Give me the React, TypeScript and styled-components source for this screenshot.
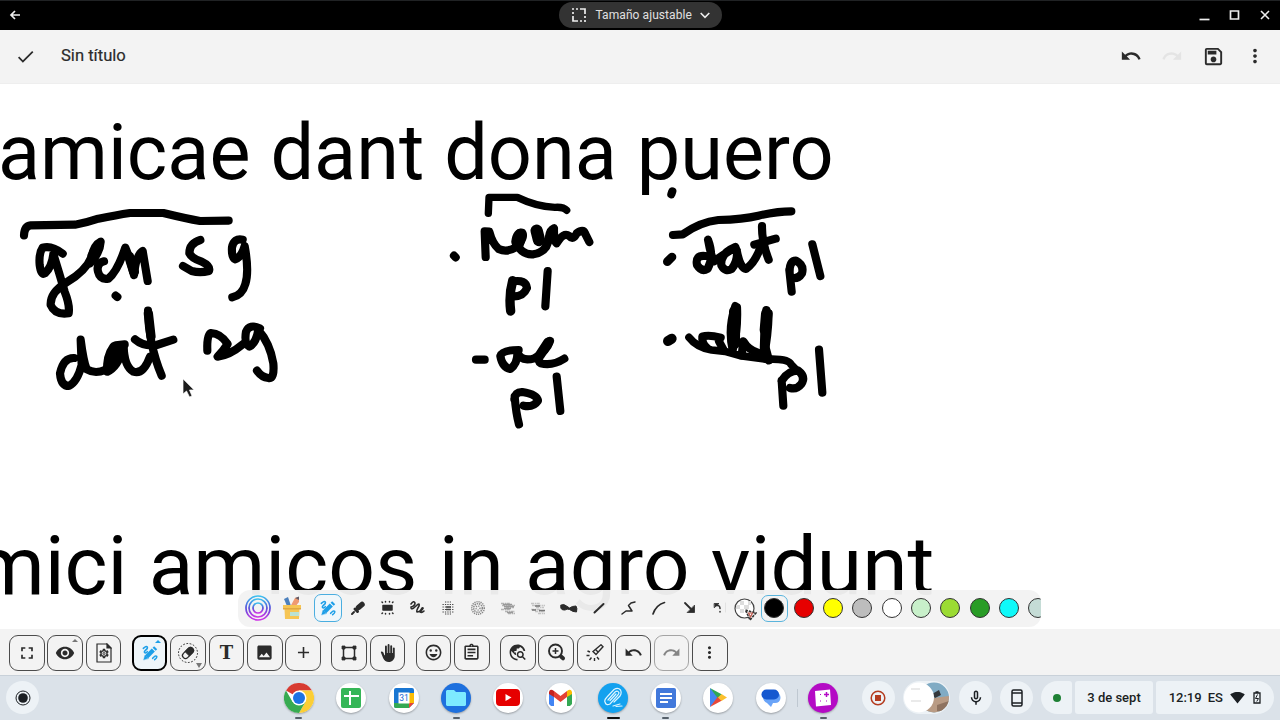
import { ReactNode } from "react";
import styled, { createGlobalStyle, css } from "styled-components";
import {
  MdAdd,
  MdBackHand,
  MdCheck,
  MdFullscreen,
  MdImage,
  MdMoreVert,
  MdOutlineAssignment,
  MdOutlineEmojiEmotions,
  MdOutlineMicNone,
  MdOutlineSave,
  MdRedo,
  MdSettings,
  MdSignalWifi4Bar,
  MdTravelExplore,
  MdUndo,
  MdVisibility,
} from "react-icons/md";

const GlobalStyle = createGlobalStyle`
  * {
    box-sizing: border-box;
  }
  body {
    margin: 0;
    background: #fff;
    font-family: Roboto, "Liberation Sans", sans-serif;
  }
  svg {
    display: block;
    flex: none;
  }
`;

const Screen = styled.div`
  display: flex;
  flex-direction: column;
  width: 1280px;
  height: 720px;
  overflow: hidden;
`;

const TitleBar = styled.header`
  display: grid;
  grid-template-columns: 1fr 163px 1fr;
  align-items: center;
  height: 30px;
  padding: 0 8px 1px;
  background: #000;
  border-top: 1px solid #202224;
  color: #eee;
`;

const SizePill = styled.div`
  display: flex;
  align-items: center;
  height: 26px;
  padding: 0 12px 0 13px;
  border-radius: 13px;
  background: #333;
  color: #e0e0e0;
  font-size: 12px;
  letter-spacing: 0.08px;
  white-space: nowrap;
`;

const PillLabel = styled.span`
  flex: 1;
  margin-left: 10px;
`;

const WindowButtons = styled.div`
  display: flex;
  justify-content: flex-end;
  gap: 17px;
`;

const AppBar = styled.div`
  display: flex;
  align-items: center;
  height: 54px;
  padding: 0 14px 1px 15px;
  background: #f3f3f3;
  border-bottom: 1px solid #eee;
  color: #2b2b2b;
`;

const DocTitle = styled.h1`
  flex: 1;
  margin: 0 0 2px 25px;
  font-size: 16.6px;
  font-weight: 400;
  -webkit-text-stroke: 0.2px #2b2b2b;
`;

const AppActions = styled.div`
  display: flex;
  align-items: center;
  gap: 19px;
`;

const Faded = styled.span`
  color: #e4e4e4;
`;

const Canvas = styled.main`
  position: relative;
  height: 545px;
  overflow: hidden;
  background: #fff;
`;

const CanvasText = styled.p<{ x: number; y: number; size: number }>`
  position: absolute;
  left: ${({ x }) => x}px;
  top: ${({ y }) => y}px;
  margin: 0;
  color: #000;
  font-size: ${({ size }) => size}px;
  line-height: 94px;
  word-spacing: 0.8px;
  white-space: nowrap;
`;

const Ink = styled.svg`
  position: absolute;
  inset: 0;
  fill: none;
  stroke: #000;
  stroke-width: 24.5;
  stroke-linecap: round;
  stroke-linejoin: round;
`;

const Palette = styled.div`
  position: absolute;
  left: 238px;
  bottom: 2px;
  display: flex;
  align-items: center;
  width: 803px;
  height: 37px;
  padding: 0 0 1px 5px;
  border-radius: 12px;
  background: rgba(243, 243, 243, 0.96);
  overflow: hidden;
  color: #2b2b2b;
`;

const PaletteTool = styled.div<{ w?: number; active?: boolean }>`
  display: flex;
  flex: none;
  align-items: center;
  justify-content: center;
  width: ${({ w = 30.2 }) => w}px;
  height: 28px;
  ${({ active }) =>
    active &&
    css`
      margin: 0 2.5px 0 2px;
      border: 1px solid #4aaee0;
      border-radius: 7px;
      background: #f0f7fb;
      color: #1d9fe8;
    `}
`;

const SwatchCell = styled.div<{ active?: boolean }>`
  display: flex;
  flex: none;
  align-items: center;
  justify-content: center;
  width: 27px;
  height: 27px;
  margin-right: 2.35px;
  border: 1px solid ${({ active }) => (active ? "#5ab4dc" : "transparent")};
  border-radius: 7px;
`;

const Swatch = styled.span<{ color: string }>`
  flex: none;
  width: 20px;
  height: 20px;
  border: 1.2px solid #333;
  border-radius: 50%;
  background: ${({ color }) => color};
`;

const Toolbar = styled.div`
  display: flex;
  gap: 10.4px;
  height: 46px;
  padding: 6px 9px 0;
  background: #f3f3f3;
`;

const ToolGroup = styled.div`
  display: flex;
  gap: 2.8px;
`;

const ToolButton = styled.button<{ active?: boolean; muted?: boolean }>`
  position: relative;
  display: flex;
  align-items: center;
  justify-content: center;
  width: 35.6px;
  height: 35.6px;
  padding: 0;
  border: ${({ active }) => (active ? "2.5px solid #000" : "1px solid #4c4c4c")};
  border-radius: 9px;
  background: transparent;
  color: #2b2b2b;
  ${({ active }) => active && "color: #1d9fe8; background: #eef5f9;"}
  ${({ muted }) => muted && "color: #858585; border-color: #a4a4a4;"}
`;

const Corner = styled.span<{ down?: boolean; tint?: string }>`
  position: absolute;
  right: ${({ down }) => (down ? 3 : 4)}px;
  ${({ down }) => (down ? "bottom: 2px;" : "top: 3px;")}
  border: 3px solid transparent;
  ${({ down, tint = "#777" }) =>
    down
      ? `border-top: 5px solid ${tint}; border-bottom: 0;`
      : `border-bottom: 3px solid ${tint}; border-top: 0;`}
`;

const SerifT = styled.span`
  font: bold 18px "DejaVu Serif", serif;
`;

const Shelf = styled.footer`
  display: flex;
  align-items: center;
  height: 45px;
  padding: 0 6px 1px;
  border-top: 1px solid #c9d1d9;
  background: #dbe2e9;
  color: #1b1f23;
`;

const Apps = styled.div`
  display: flex;
  flex: 1;
  justify-content: flex-start;
  margin-left: 233.5px;
`;

const AppSlot = styled.div<{ mark?: "running" | "focused"; divided?: boolean }>`
  position: relative;
  display: flex;
  justify-content: center;
  width: 52.45px;
  ${({ divided }) =>
    divided &&
    css`
      background: linear-gradient(#bfc8d1, #bfc8d1) 0 50% / 1px 18px no-repeat;
    `}
  &::after {
    content: "";
    position: absolute;
    top: 34px;
    width: ${({ mark }) => (mark === "focused" ? 13 : mark ? 7 : 0)}px;
    height: 2px;
    border-radius: 1px;
    background: ${({ mark }) => (mark === "focused" ? "#111" : "#56606a")};
  }
`;

const AppIcon = styled.span<{ bg?: string }>`
  display: flex;
  align-items: center;
  justify-content: center;
  width: 30px;
  height: 30px;
  border-radius: 50%;
  background: ${({ bg = "#fff" }) => bg};
  box-shadow: 0 1px 2px rgba(0, 0, 0, 0.3);
`;

const Tray = styled.div`
  display: flex;
  align-items: center;
  gap: 8px;
`;

const RoundButton = styled.div`
  display: flex;
  align-items: center;
  justify-content: center;
  width: 33px;
  height: 33px;
  border-radius: 50%;
  background: #edf2f6;
`;

const HoldingPill = styled.div`
  width: 47px;
  height: 33px;
  margin: 0 1px 0 0.5px;
  border-radius: 17px;
  background: #edf2f6;
`;

const StatusArea = styled.div`
  display: flex;
  gap: 3px;
`;

const StatusBlock = styled.div<{ w: number; side?: "left" | "right" }>`
  display: flex;
  align-items: center;
  justify-content: center;
  gap: 6px;
  width: ${({ w }) => w}px;
  height: 33px;
  border-radius: ${({ side }) => (side === "left" ? "17px 3px 3px 17px" : side === "right" ? "3px 17px 17px 3px" : "3px")};
  background: #edf2f6;
  font-size: 13px;
  font-weight: 500;
  white-space: nowrap;
`;

const StatusIcons = styled.span`
  display: flex;
  align-items: center;
  gap: 8.5px;
  margin-left: 1px;
`;

const GreenDot = styled.span`
  width: 8px;
  height: 8px;
  border-radius: 50%;
  background: #1e8035;
`;

const MagicPen = ({ size = 18 }: { size?: number }) => (
  <svg width={size} height={size} viewBox="0 0 24 24" fill="none" stroke="currentColor" strokeLinecap="round">
    <path d="M7 17.500 L17 7.500" strokeWidth="6.500" strokeLinecap="butt" />
    <path d="M18.200 6.300 L20.500 4" strokeWidth="6.500" strokeLinecap="butt" />
    <path d="M2.500 22 L4.500 15 L9.500 20 Z" fill="currentColor" strokeWidth="0.500" />
    <path d="M2 5 Q6 1 8 3 Q9 5 5 8 Q2 11 5 12 Q7 12 8 10" strokeWidth="2.300" />
    <path d="M16 20 Q20 15 22 17 Q23 19 19 22" strokeWidth="2.300" />
  </svg>
);

// Stroke-only glyphs of the brush palette, all on a 20px box.
const Glyph = ({ children, width = 2 }: { children: ReactNode; width?: number }) => (
  <svg width="20" height="20" viewBox="0 0 20 20" fill="none" stroke="#2b2b2b" strokeWidth={width} strokeLinecap="round" strokeLinejoin="round">
    {children}
  </svg>
);

const Spray = ({ kind }: { kind: "grid" | "circle" | "chalk" | "smoke" }) => {
  if (kind === "grid") {
    return (
      <svg width="20" height="20" viewBox="0 0 20 20" fill="none" stroke="#444" strokeWidth="1.200">
        <path d="M7 4h6M4.500 6.500h11M4.500 9h11M4.500 11.500h11M4.500 14h11M7 16h6" strokeDasharray="1.300 1.100" />
        <path d="M8 9h5M8 11.500h5" strokeWidth="1.500" />
      </svg>
    );
  }
  if (kind === "circle") {
    return (
      <svg width="20" height="20" viewBox="0 0 20 20" fill="none" stroke="#888" strokeWidth="1.500">
        <circle cx="10" cy="10" r="6.300" strokeDasharray="1.200 0.900" />
        <circle cx="10" cy="10" r="4.300" strokeDasharray="1.500 0.800" />
        <circle cx="10" cy="10" r="2" strokeDasharray="1 1.200" />
      </svg>
    );
  }
  return (
    <svg width="20" height="20" viewBox="0 0 20 20" fill="none" stroke={kind === "chalk" ? "#b4b4b4" : "#c4c4c4"} strokeWidth="1.300">
      <path d="M3 5.500h9M4 7.500h13M8 9.500h8M3 11.500h9M7 13.500h10M10 15.500h7" strokeDasharray="3 0.800 1.500 0.500" />
      {kind === "chalk" && <path d="M5 6.500h9M6 8.500h10M6 10.500h7M9 14.500h6" stroke="#999" />}
      {kind === "smoke" && <path d="M7 8h5M4 12h4M11 12.500h6" stroke="#777" />}
    </svg>
  );
};

const CanvasInk = () => (
  <Ink width="1280" height="545" viewBox="0 84 1280 545">
    <g transform="translate(0 190) scale(0.33333)">
      <path d="M72 136 Q73 108 92 106 L225 104 Q260 98 295 86 Q350 75 390 69 L490 69 Q560 86 600 93 L686 92" />
      <path d="M188 191 Q155 165 128 173 Q116 190 119 225 Q123 257 135 250 Q156 230 160 192 Q178 250 194 305 Q210 345 206 370 Q165 376 152 345 Q150 308 200 277 Q258 242 275 200 Q282 165 302 155 Q300 190 270 220" />
      <path d="M292 175 L278 198" strokeWidth="32" />
      <path d="M312 214 Q288 220 294 245 Q300 270 325 266 Q352 245 376 173 Q388 200 402 255 Q408 195 428 183 L443 273" />
      <path d="M388 200 L402 245" strokeWidth="30" />
      <path d="M347 317 L352 321" />
      <path d="M601 150 Q568 160 568 190 Q575 205 605 215 Q632 228 627 243 Q600 250 575 243 L549 228" />
      <path d="M728 149 Q702 143 696 172 Q694 204 706 208 Q725 200 734 168 Q748 245 736 282 Q727 315 697 322" />
      <path d="M222 504 Q190 503 180 550 Q183 588 207 588 Q232 575 245 525 L242 449 Q250 512 260 538 Q285 553 315 540 Q345 510 347 466 L374 463" />
      <path d="M340 470 Q318 500 322 545 Q355 530 371 470 Q373 530 400 545 Q430 555 450 500" />
      <path d="M444 362 Q445 410 454 455 Q465 510 485 557" />
      <path d="M445 370 L453 440" strokeWidth="28" />
      <path d="M405 448 Q430 470 470 465 L520 449" />
      <path d="M622 482 Q620 432 633 429 Q662 430 683 462 Q672 480 653 500 Q690 495 728 463" />
      <path d="M780 415 Q748 400 738 425 Q732 462 748 470 Q768 460 775 420 Q810 460 820 520 Q824 568 805 564 Q785 562 771 542" />
    </g>
    <g transform="translate(440 180) scale(0.33333)">
      <path d="M145 100 L147 52 L232 52 Q290 80 345 82 Q370 80 380 91" strokeWidth="22" />
      <path d="M42 227 L47 232" />
      <path d="M137 231 L134 154 L148 155 Q157 190 176 207 Q200 218 225 203 Q255 178 247 158 Q230 155 226 185 Q245 226 280 223 Q325 215 327 170 Q330 150 342 145 Q341 185 350 190 Q370 155 388 168 Q400 182 410 160 Q430 145 435 160 L448 186" />
      <path d="M242 165 L234 190M290 152 L297 180" strokeWidth="37" />
      <path d="M218 302 Q206 345 212 393" strokeWidth="28" />
      <path d="M220 304 Q257 298 261 324 Q250 350 220 349M323 273 L316 379" />
      <path d="M108 539 L134 539" />
      <path d="M236 510 Q187 510 181 528 Q187 562 211 567 Q234 550 232 516 Q243 547 283 535 Q320 514 330 483" />
      <path d="M320 495 Q285 540 302 550 Q337 559 373 536" />
      <path d="M325 487 L300 525" strokeWidth="30" />
      <path d="M224 650 Q228 700 237 733M223 657 Q226 635 247 636 Q290 642 294 662 Q280 683 251 677M350 590 L361 693" />
    </g>
    <g transform="translate(640 180) scale(0.33333)">
      <path d="M97 34 L94 43" />
      <path d="M99 165 L128 163 Q180 126 235 120 Q310 118 355 107 Q410 94 454 94" />
      <path d="M96 231 L82 245" strokeWidth="26" />
      <path d="M195 228 Q165 225 171 255 Q185 277 203 266 Q223 230 204 179 Q212 225 222 244 Q242 230 286 201 Q240 220 244 256 Q256 278 275 267 Q295 242 290 210 Q300 265 318 267 Q348 245 363 196" />
      <path d="M366 138 Q365 185 386 239M343 194 L407 176" />
      <path d="M448 270 L455 335M449 277 Q448 243 468 242 Q493 255 486 280 Q475 298 455 294M517 193 L541 288" />
      <path d="M95 476 L84 483" strokeWidth="30" />
      <path d="M147 472 Q170 502 215 510 L255 514 L300 527 L380 538 Q445 535 453 553 L471 572" strokeWidth="23" />
      <path d="M242 473 Q205 463 187 470 Q185 490 200 503 M237 484 L250 508" />
      <path d="M286 378 Q263 445 278 510 Q294 450 291 382 M379 390 Q370 460 372 525 Q384 470 386 400" />
      <path d="M284 395 L283 490 M380 401 L376 450" strokeWidth="34" />
      <path d="M305 526 L310 484 Q325 510 355 519M387 541 L376 500" />
      <path d="M425 602 L430 677M425 602 Q445 571 475 572 Q498 590 484 612 Q470 630 450 624M537 509 L547 638" />
    </g>
    <path d="M183 379 V394 L186.500 391 L189.500 397 L192 396 L189.500 390 H194 Z" fill="#1c1c1c" stroke="#fff" strokeWidth="0.700" />
  </Ink>
);

const swatches = ["#000", "#e60000", "#ffff00", "#bdbdbd", "#fff", "#c8f0ca", "#9bdb33", "#299c26", "#0ff9f9", "#c5dcd6"];

const BrushPalette = () => (
  <Palette>
    <PaletteTool w={30}>
      <svg width="26" height="26" viewBox="0 0 26 26" fill="none" strokeWidth="1.700">
        <defs>
          <linearGradient id="ring" x1="0" y1="0" x2="0" y2="1">
            <stop offset="0" stopColor="#3cc1ee" />
            <stop offset="0.5" stopColor="#5850da" />
            <stop offset="1" stopColor="#cf35e6" />
          </linearGradient>
        </defs>
        <g stroke="url(#ring)">
          <circle cx="13" cy="13" r="12" />
          <circle cx="13" cy="13" r="9" />
          <circle cx="13" cy="13" r="5" />
        </g>
      </svg>
    </PaletteTool>
    <PaletteTool w={38.5}>
      <svg width="20" height="24" viewBox="0 0 20 24">
        <path d="M2 3 L6 1 L9 10 H5Z" fill="#4c80bd" />
        <path d="M8 11 L13 2 L17 1 L17 6 L13 11Z" fill="#ef9a72" />
        <path d="M13 2 L17 0.500 L17 4Z" fill="#655c68" />
        <path d="M1 9 H19 V13 H17.500 L17 23 H3 L2.500 13 H1Z" fill="#f6c554" />
        <path d="M1 12 H19 V13.500 H1Z" fill="#dfa843" />
        <path d="M8 16 H17 V20 H8Z" fill="#b9e2d4" />
      </svg>
    </PaletteTool>
    <PaletteTool w={28} active>
      <MagicPen size={16} />
    </PaletteTool>
    <PaletteTool w={28}>
      <Glyph>
        <path d="M10.500 9.500 L14 6.500" strokeWidth="5.500" />
        <path d="M7 11 L9.500 13.500" strokeWidth="3" />
        <path d="M4 16 L6 14" />
      </Glyph>
    </PaletteTool>
    <PaletteTool>
      <Glyph width={1.5}>
        <path d="M6 7.500h9v4.500H6z" fill="#2b2b2b" />
        <path d="M5 4l.5.500M8.500 3.500v.5M12.500 3.500v.5M16 4l-.5.500M5 15.500l.5-.5M8.500 15.500v.5M12.500 15.500v.5M16 15.500l-.5-.5" />
      </Glyph>
    </PaletteTool>
    <PaletteTool w={30.5}>
      <Glyph width={1.6}>
        <path d="M4 6 Q7 2 8 5 Q8 8 4 9 Q4 13 9 8 Q13 4 12 8 Q9 13 10 14 Q13 14 15 10 Q18 9 13 14 Q15 15 17 13" />
      </Glyph>
    </PaletteTool>
    <PaletteTool><Spray kind="grid" /></PaletteTool>
    <PaletteTool><Spray kind="circle" /></PaletteTool>
    <PaletteTool><Spray kind="chalk" /></PaletteTool>
    <PaletteTool><Spray kind="smoke" /></PaletteTool>
    <PaletteTool>
      <Glyph width={1}>
        <path d="M2 7 Q5 5.500 7.500 8 L10.500 10 Q13 8 17 8 Q18.500 10 17.500 14 Q14 14 10.500 11.500 Q8 10.500 6 12 Q3 12.500 2 10.500Z" fill="#2b2b2b" />
      </Glyph>
    </PaletteTool>
    <PaletteTool>
      <Glyph><path d="M5.500 14.500 L14.500 6" /></Glyph>
    </PaletteTool>
    <PaletteTool>
      <Glyph width={1.5}><path d="M3 16 L7 13 H13 L9.500 7.500 L12 5 L16 4" /></Glyph>
    </PaletteTool>
    <PaletteTool w={30.5}>
      <Glyph width={1.7}><path d="M4 16 Q7 7 15.500 4.500" /></Glyph>
    </PaletteTool>
    <PaletteTool>
      <Glyph width={1.8}>
        <path d="M5 5 L11 11" />
        <path d="M14.500 7.500 V14.500 H7.500Z" fill="#2b2b2b" strokeWidth="0.800" />
      </Glyph>
    </PaletteTool>
    <PaletteTool w={26.7}>
      <Glyph width={1.5}>
        <path d="M6.500 5.500h4.500l-4.500 4z" fill="#2b2b2b" strokeWidth="0.800" />
        <path d="M8.500 7.500 Q12 7 12 10.500M12 13.500v.5" />
        <path d="M17.500 5v9" stroke="#ddd" strokeWidth="0.800" />
      </Glyph>
    </PaletteTool>
    <SwatchCell>
      <svg width="25" height="25" viewBox="0 0 25 25">
        <circle cx="12.500" cy="12.500" r="9.500" fill="#fff" stroke="#444" strokeWidth="1.200" />
        <path d="M4 9h4v4H4zM8 5h4v4H8zM12 9h5v4h-5zM16 5h3v4h-3zM8 13h4v4H8z" fill="#ddd" />
        <path d="M13.500 14 L24 17 L18 24 Z" fill="#eee" stroke="#333" strokeWidth="1.600" strokeDasharray="2.500 1" />
        <path d="M16.500 17h4l-2 4z" fill="#fff" stroke="#bd584c" strokeWidth="1.200" />
      </svg>
    </SwatchCell>
    {swatches.map((color, i) => (
      <SwatchCell key={color} active={i === 0}>
        <Swatch color={color} />
      </SwatchCell>
    ))}
  </Palette>
);

const MainToolbar = () => (
  <Toolbar>
    <ToolGroup>
      <ToolButton><MdFullscreen size={20} /></ToolButton>
      <ToolButton><MdVisibility size={20} /><Corner /></ToolButton>
      <ToolButton>
        <svg width="16" height="20" viewBox="0 0 16 20" fill="none" stroke="currentColor" strokeWidth="1.200">
          <path d="M1 1 H11 L15 5 V19 H1Z" />
          <path d="M11 1v4h4z" fill="currentColor" />
          <g transform="translate(2 4.500)" stroke="none"><MdSettings size={12} /></g>
          <circle cx="8" cy="10.500" r="2.700" fill="#f3f3f3" strokeWidth="0.900" />
          <circle cx="8" cy="10.500" r="1" strokeWidth="0.900" />
        </svg>
      </ToolButton>
    </ToolGroup>
    <ToolGroup>
      <ToolButton active><MagicPen size={16} /><Corner tint="#1d9fe8" /></ToolButton>
      <ToolButton>
        <svg width="22" height="22" viewBox="0 0 22 22" fill="none" stroke="currentColor">
          <circle cx="11" cy="11" r="9.500" strokeDasharray="1.700 1.600" />
          <g transform="rotate(-45 11 11)">
            <rect x="4.500" y="8" width="13" height="6" rx="3" strokeWidth="1.300" />
            <path d="M10 8h4.500q3 0 3 3t-3 3h-4.500z" fill="currentColor" />
          </g>
        </svg>
        <Corner down />
      </ToolButton>
      <ToolButton><SerifT>T</SerifT></ToolButton>
      <ToolButton><MdImage size={19} /></ToolButton>
      <ToolButton><MdAdd size={19} /></ToolButton>
    </ToolGroup>
    <ToolGroup>
      <ToolButton>
        <svg width="16" height="16" viewBox="0 0 16 16" stroke="currentColor" fill="none">
          <path d="M2.500 2.500h11v11h-11z" strokeWidth="1.500" />
          <path d="M1 1h3v3H1zM12 1h3v3h-3zM1 12h3v3H1zM12 12h3v3h-3z" fill="currentColor" strokeWidth="0.800" />
        </svg>
      </ToolButton>
      <ToolButton><MdBackHand size={18} /></ToolButton>
    </ToolGroup>
    <ToolGroup>
      <ToolButton><MdOutlineEmojiEmotions size={19} /></ToolButton>
      <ToolButton><MdOutlineAssignment size={19} /></ToolButton>
    </ToolGroup>
    <ToolGroup>
      <ToolButton><MdTravelExplore size={19} /></ToolButton>
      <ToolButton>
        <svg width="19" height="19" viewBox="0 0 19 19" fill="none" stroke="currentColor" strokeWidth="1.900">
          <circle cx="8.500" cy="8" r="6.500" />
          <path d="M8.500 5v6M5.500 8h6" strokeWidth="1.500" />
          <path d="M14 13.500 L16 15.300" strokeWidth="4" strokeLinecap="round" />
        </svg>
      </ToolButton>
      <ToolButton>
        <svg width="18" height="18" viewBox="0 0 18 18" fill="none" stroke="currentColor" strokeWidth="1.400">
          <path d="M7 7.500 L15 0.800 L17 2.800 L10 10.500Z" />
          <path d="M9.500 5.500 L12 8M4 8 L1.500 7M3.500 11.500H0.500M5.500 13.500 L3.500 16M8.500 14 V17M11 13 L13 15.500" />
        </svg>
      </ToolButton>
      <ToolButton><MdUndo size={19} /></ToolButton>
      <ToolButton muted><MdRedo size={19} /></ToolButton>
      <ToolButton><MdMoreVert size={19} /></ToolButton>
    </ToolGroup>
  </Toolbar>
);

const ShelfApps = () => (
  <Apps>
    <AppSlot mark="running">
      <AppIcon>
        <svg width="30" height="30" viewBox="0 0 30 30">
          <path d="M15 15 L2 7.500 A15 15 0 0 1 28 7.500 L15 7.500Z" fill="#d73b32" />
          <path d="M15 7.500 H28 A15 15 0 0 1 15 30 L21.500 18.750Z" fill="#fbce35" />
          <path d="M2 7.500 A15 15 0 0 0 15 30 L21.500 18.750 L8.500 18.750Z" fill="#37ab51" />
          <circle cx="15" cy="15" r="7.500" fill="#fff" />
          <circle cx="15" cy="15" r="6" fill="#1d73e4" />
        </svg>
      </AppIcon>
    </AppSlot>
    <AppSlot>
      <AppIcon>
        <svg width="20" height="20" viewBox="0 0 20 20">
          <rect width="20" height="20" rx="2" fill="#35b657" />
          <path d="M9 3v14M3 8h15" stroke="#fff" strokeWidth="2" />
        </svg>
      </AppIcon>
    </AppSlot>
    <AppSlot>
      <AppIcon>
        <svg width="20" height="20" viewBox="0 0 20 20">
          <path d="M0 2q0-2 2-2h16q2 0 2 2v13l-5 5H2q-2 0-2-2z" fill="#1976d2" />
          <path d="M15 5h5v10h-5z" fill="#fbbc04" />
          <path d="M0 15h15v5H2q-2 0-2-2z" fill="#34a853" />
          <path d="M15 15h5l-5 5z" fill="#ea4335" />
          <path d="M4.500 4.500h11v11h-11z" fill="#fff" />
          <text x="10" y="13" textAnchor="middle" fontSize="8.500" fontFamily="Roboto, sans-serif" fill="#1967d2">31</text>
        </svg>
      </AppIcon>
    </AppSlot>
    <AppSlot mark="running">
      <AppIcon bg="#1d70de">
        <svg width="20" height="16" viewBox="0 0 20 16">
          <path d="M1 0h7l2 2h9l1 1v12l-1 1H1l-1-1V1z" fill="#7deaff" />
        </svg>
      </AppIcon>
    </AppSlot>
    <AppSlot>
      <AppIcon>
        <svg width="24" height="17" viewBox="0 0 24 17">
          <rect width="24" height="17" rx="4" fill="#e60000" />
          <path d="M9.500 5 L15.500 8.500 L9.500 12Z" fill="#fff" />
        </svg>
      </AppIcon>
    </AppSlot>
    <AppSlot>
      <AppIcon>
        <svg width="23" height="17" viewBox="0 0 23 17">
          <path d="M0 3 L5 6.500 V17 H2 L0 15Z" fill="#4285f4" />
          <path d="M18 6.500 L23 3 V15 L21 17 H18Z" fill="#34a853" />
          <path d="M5 2 L11.500 7 L18 2 V8 L11.500 13 L5 8Z" fill="#e44134" />
          <path d="M0 3 Q1-1 5 2 V8 L0 5Z" fill="#c5221f" />
          <path d="M23 3 Q22-1 18 2 V8 L23 5Z" fill="#fbbc04" />
        </svg>
      </AppIcon>
    </AppSlot>
    <AppSlot mark="focused">
      <AppIcon bg="#13a1ef">
        <svg width="22" height="22" viewBox="0 0 22 22" fill="none" stroke="#dff5ff" strokeWidth="1.200" strokeLinecap="round">
          <path d="M6 13 L13 5 Q16 3 17 6 L16 8 L8 17 Q4 19 3 15 Q2 13 5 10 L12 2.500 Q16 0 18.500 3 Q20 6 18 9 L12 15" />
          <path d="M8 13.500 L14 7M11 19 L18 17 M14 19.500 L20 19" />
        </svg>
      </AppIcon>
    </AppSlot>
    <AppSlot mark="running">
      <AppIcon>
        <svg width="20" height="20" viewBox="0 0 20 20">
          <rect width="20" height="20" rx="2" fill="#4279db" />
          <path d="M4 6h12M4 10h12M4 14h8" stroke="#fff" strokeWidth="2" />
        </svg>
      </AppIcon>
    </AppSlot>
    <AppSlot>
      <AppIcon>
        <svg width="18" height="19" viewBox="0 0 18 19">
          <path d="M1 0 V19 L10 9.500Z" fill="#4385f1" />
          <path d="M1 0 L13 6.500 L9 10.500Z" fill="#2fa854" />
          <path d="M1 19 L13 12.500 L9 8.500Z" fill="#e84738" />
          <path d="M12.500 6 L18 9.500 L12.500 13 L9 9.500Z" fill="#fbc02d" />
        </svg>
      </AppIcon>
    </AppSlot>
    <AppSlot>
      <AppIcon>
        <svg width="20" height="18" viewBox="0 0 20 18">
          <path d="M5 3 H15 Q19.500 4 19.500 9 Q19 14 14 14 H12 L10 18 L6 14 Q2 12 2 8Z" fill="#6aa4f8" />
          <rect x="0.500" y="0.500" width="17.500" height="10" rx="5" fill="#1558d0" />
        </svg>
      </AppIcon>
    </AppSlot>
    <AppSlot mark="running" divided>
      <AppIcon bg="#b40bc5">
        <svg width="18" height="18" viewBox="0 0 18 18">
          <path d="M1 2 L16 0.500 L17 16 L2 17.500Z" fill="#fff" />
          <path d="M12.500 3v5M10 5.500h5" stroke="#b40bc5" strokeWidth="1.500" />
          <path d="M6 5.500h1M6 12h1M12 12h1" stroke="#b40bc5" strokeWidth="1.100" />
        </svg>
      </AppIcon>
    </AppSlot>
  </Apps>
);

const App = () => (
  <>
    <GlobalStyle />
    <Screen>
      <TitleBar>
        <svg width="14" height="14" viewBox="0 0 14 14" fill="none" stroke="#eee" strokeWidth="1.700">
          <path d="M12 7H3.500M7 3 L3 7 L7 11" />
        </svg>
        <SizePill>
          <svg width="14" height="14" viewBox="0 0 14 14" fill="none" stroke="#eee" strokeWidth="1.700">
            <path d="M0 1h2M4 1h2M8 1h5v5M13 8v2M13 12v2M10 13H8M1 4v2M1 8v5h5" />
          </svg>
          <PillLabel>Tamaño ajustable</PillLabel>
          <svg width="10" height="7" viewBox="0 0 10 7" fill="none" stroke="#eee" strokeWidth="1.600">
            <path d="M0.700 1 L5 5.300 L9.300 1" />
          </svg>
        </SizePill>
        <WindowButtons>
          <svg width="13" height="14" viewBox="0 0 13 14"><path d="M1.500 11.500h10" stroke="#eee" strokeWidth="1.700" /></svg>
          <svg width="13" height="14" viewBox="0 0 13 14"><path d="M2.500 3h8v8h-8z" fill="none" stroke="#eee" strokeWidth="1.700" /></svg>
          <svg width="14" height="14" viewBox="0 0 14 14"><path d="M3 3l8 8M11 3l-8 8" stroke="#eee" strokeWidth="1.600" /></svg>
        </WindowButtons>
      </TitleBar>
      <AppBar>
        <MdCheck size={21} />
        <DocTitle>Sin título</DocTitle>
        <AppActions>
          <MdUndo size={22} />
          <Faded><MdRedo size={22} /></Faded>
          <MdOutlineSave size={23} />
          <MdMoreVert size={22} />
        </AppActions>
      </AppBar>
      <Canvas>
        <CanvasText x={-2} y={22} size={77.4}>amicae dant dona puero</CanvasText>
        <CanvasText x={-72} y={435} size={82.1}>amici amicos in agro vidunt</CanvasText>
        <CanvasInk />
        <BrushPalette />
      </Canvas>
      <MainToolbar />
      <Shelf>
        <RoundButton>
          <svg width="16" height="16" viewBox="0 0 16 16">
            <circle cx="8" cy="8" r="7" fill="none" stroke="currentColor" />
            <circle cx="8" cy="8" r="4.800" fill="currentColor" />
          </svg>
        </RoundButton>
        <ShelfApps />
        <Tray>
          <RoundButton>
            <svg width="16" height="16" viewBox="0 0 16 16" fill="#b43c20">
              <circle cx="8" cy="8" r="6.800" fill="none" stroke="#b43c20" strokeWidth="1.500" />
              <path d="M5 5h6v6H5z" />
            </svg>
          </RoundButton>
          <HoldingPill>
            <svg width="47" height="33" viewBox="0 0 47 33">
              <clipPath id="photo"><circle cx="31" cy="16.500" r="15" /></clipPath>
              <g clipPath="url(#photo)">
                <path d="M16 0h31v33H16z" fill="#80abc4" />
                <path d="M16 20 L30 17 L47 15 V33 H16Z" fill="#b99b84" />
                <path d="M29 13 L36 9 L38 14 L32 17Z" fill="#34383c" />
                <path d="M34 24 L46 20 V30 H34Z" fill="#8f7360" />
              </g>
              <circle cx="16" cy="16.500" r="15" fill="#fff" />
              <path d="M8 8h9M8 20h10" stroke="#bbb" strokeWidth="0.600" />
            </svg>
          </HoldingPill>
          <RoundButton><MdOutlineMicNone size={18} /></RoundButton>
          <RoundButton>
            <svg width="12" height="18" viewBox="0 0 12 18" fill="none" stroke="currentColor" strokeWidth="1.500">
              <rect x="1" y="1" width="10" height="16" rx="1.500" />
              <path d="M1 4h10M1 14h10" />
            </svg>
          </RoundButton>
          <StatusArea>
            <StatusBlock w={31} side="left"><GreenDot /></StatusBlock>
            <StatusBlock w={78}>3 de sept</StatusBlock>
            <StatusBlock w={118} side="right">
              <span>12:19</span>
              <span>ES</span>
              <StatusIcons>
                <MdSignalWifi4Bar size={15} />
                <svg width="8" height="13" viewBox="0 0 8 13" fill="none" stroke="currentColor" strokeWidth="1.300">
                  <path d="M1 2h6v10H1zM2.500 1h3" />
                  <path d="M4.500 3.500 L2.500 7.500 H5.500 L3.700 10.500" strokeWidth="1" />
                </svg>
              </StatusIcons>
            </StatusBlock>
          </StatusArea>
        </Tray>
      </Shelf>
    </Screen>
  </>
);

export default App;
